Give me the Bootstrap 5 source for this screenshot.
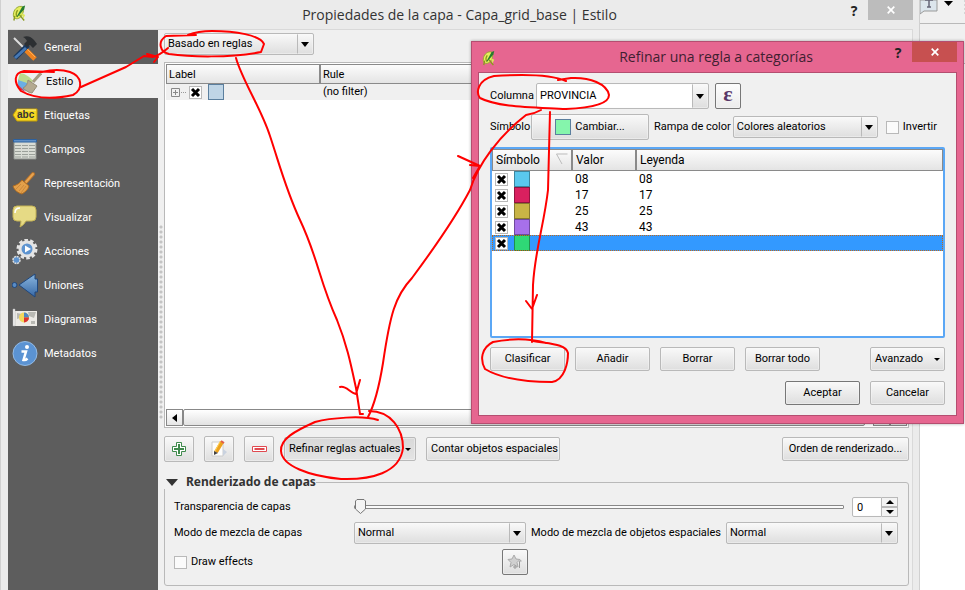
<!DOCTYPE html>
<html lang="es">
<head>
<meta charset="utf-8">
<meta name="viewport" content="width=device-width, initial-scale=1">
<title>Propiedades de la capa - Capa_grid_base | Estilo</title>
<link href="https://cdn.jsdelivr.net/npm/bootstrap@5.3.0/dist/css/bootstrap.min.css" rel="stylesheet">
<style>
:root { --face: #f0f0f0; --edge: #b9b9b9; --pink: #e66690; }
body { font: 11px/14px Roboto, Tahoma, sans-serif; color: #000; background: #fff; min-height: 100vh; overflow-x: hidden; }

/* main window */
.win { background: #ebebeb; border-right: 1px solid #d0d0d0; border-left: 1px solid #d0d0d0; padding: 0 6px 0 7px; min-width: 0; }
.win-title { height: 29px; font: 14px/22px "Open Sans", "Segoe UI", sans-serif; color: #333; }
.win-body { background: var(--face); border: 1px solid #d9d9d9; border-width: 1px 1px 0 0; min-height: 0; }
.tbtn { border: 0; background: none; padding: 0; font: bold 14px/20px "Noto Sans", sans-serif; color: #222; width: 20px; height: 21px; }
.xbtn { border: 0; width: 45px; height: 20px; background: #bcbcbc; padding: 0; }
.xbtn svg { display: block; margin: auto; }

/* section list */
.side { width: 150px; background: #5d5d5d; }
.side a { height: 34px; color: #fff; text-decoration: none; padding: 2px 4px 0; gap: 6px; font-size: 12px; }
.side a svg { width: 26px; height: 26px; flex: none; }
.side a.on { background: var(--face); color: #000; padding-left: 9px; gap: 4px; }
.side a.on svg { width: 25px; }
.side a, .side a.on { font-size: 11px; }
.grip { width: 6px; margin: 195px 0 0; height: 195px; background: radial-gradient(circle at 3px 2px, #c4c4c4 1px, transparent 2px) 0 0 / 5px 5px repeat-y; }
.pane { padding: 3px 3px 4px 0; min-width: 0; }

/* controls */
.ctl, .pick, .num { border: 1px solid var(--edge); border-radius: 2px; background-color: #eee; background-image: linear-gradient(#f9f9f9, #dedede); color: #000; font: inherit; padding: 0 4px; height: 24px; box-shadow: inset 0 0 0 1px #fafafa66; white-space: nowrap; }
.ctl.sq { width: 30px; height: 26px; padding: 0; display: flex; align-items: center; justify-content: center; }
.ctl.dk { border-color: #777; }
.ctl.w75 { width: 75px; }
.ctl.refine { width: 132px; background-image: linear-gradient(#d8d8d8, #e4e4e4); }
.ctl.count { width: 134px; }
.ctl.order { width: 127px; }
.ctl.star { width: 26px; }
.ctl.eps { width: 26px; margin-left: 6px; font: bold 22px/20px "Liberation Serif", serif; color: #5a3768; background-image: linear-gradient(#fdfdfd, #ececec); padding-bottom: 5px; }
.ctl.sym { width: 118px; height: 26px; }
.pick { appearance: none; height: 22px; padding: 0 20px 0 3px; text-overflow: ellipsis; background-repeat: no-repeat;
  background-image: url("data:image/svg+xml,%3Csvg xmlns='http://www.w3.org/2000/svg' viewBox='0 0 8 5'%3E%3Cpath d='M0 0h8L4 5z'/%3E%3C/svg%3E"), linear-gradient(#b9b9b9, #b9b9b9), linear-gradient(#f9f9f9, #dedede);
  background-position: right 4px center, right 15px top, 0 0; background-size: 8px 5px, 1px 100%, auto; }
.pick.lite { height: 26px; background-color: #fff; background-size: 8px 5px, 1px 100%, 15px 100%; background-position: right 4px center, right 15px top, right top; }
.caret { width: 0; height: 0; border: 3px solid transparent; border-top-color: #000; border-bottom: 0; display: inline-block; }
.tick { appearance: none; width: 13px; height: 13px; margin: 0; border: 1px solid var(--edge); background: #fbfbfb; flex: none; display: block; }
.tick:checked { background: #fff url("data:image/svg+xml,%3Csvg xmlns='http://www.w3.org/2000/svg' viewBox='0 0 11 11'%3E%3Cpath d='M2 2l7 7M9 2l-7 7' stroke='%23000' stroke-width='3'/%3E%3C/svg%3E") center / 11px 11px no-repeat; }

/* rule tree and category table */
.frame { background: #fff; border: 1px solid #b9b9b9; padding: 1px; flex: 1 1 auto; margin-top: 7px; }
.grid-t { width: 100%; table-layout: fixed; border-collapse: separate; border-spacing: 0; }
.grid-t th { font-weight: 400; height: 20px; padding: 0 3px; background: linear-gradient(#fcfcfc, #e4e4e4); border: 1px solid #8a8a8a; }
.grid-t td { height: 16px; padding: 0 3px; line-height: 16px; }
.tree td { background: var(--face); }
.tree th { padding: 2px 2px 0; }
.tree .tick { margin: 0 6px 0 2px; }
.chip { width: 16px; height: 16px; border: 1px solid #5b7f9e; display: block; flex: none; }
.hbar { height: 17px; }
.hbar button { width: 17px; border: 1px solid #888; background: linear-gradient(#fff, #e6e6e6); padding: 0; display: flex; align-items: center; justify-content: center; }
.hbar div { border: 1px solid #888; background: linear-gradient(#fff, #e2e2e2); border-radius: 2px; }
.tools { gap: 10px; }

/* layer rendering group */
.grp { border: 1px solid var(--edge); border-radius: 3px; margin: 13px 0 0; padding: 6px 10px 10px 9px; min-width: 0; }
.grp legend { float: none; width: auto; font: bold 12px/14px "Noto Sans", sans-serif; color: #333; margin: -8px 0 0 -10px; padding: 0 0 0 2px; background: var(--face); }
.lab { width: 180px; flex: none; }
.r1 { margin-top: 2px; }
.r2, .r3 { margin-top: 5px; }
.gap-lab { margin: 0 5px; }
.fx-label { width: 311px; }
.slide { appearance: none; height: 18px; background: none; margin: 0; min-width: 0; }
.slide::-webkit-slider-runnable-track { height: 4px; border: 1px solid #888; border-radius: 1px; background: #fafafa; }
.slide::-webkit-slider-thumb { appearance: none; width: 11px; height: 15px; margin-top: -7px; background: url("data:image/svg+xml,%3Csvg xmlns='http://www.w3.org/2000/svg' viewBox='0 0 11 15'%3E%3Cpath d='M2 .5h7L10.500 2v8l-5 4.500-5-4.500V2z' fill='%23f4f4f4' stroke='%23777'/%3E%3C/svg%3E"); }
.num { width: 30px; height: 20px; background: #fff; border-radius: 2px 0 0 2px; }
.spin button { border: 1px solid var(--edge); border-left: 0; background: #f3f3f3; width: 16px; height: 10px; padding: 0; display: flex; align-items: center; justify-content: center; }

/* application behind */
.rest { width: 45px; flex: none; }
.rest-top { height: 24px; background: var(--face); border-bottom: 1px solid #b9b9b9; }
.rest-mid { height: 40px; background: var(--face); border-bottom: 1px solid #b9b9b9; }

/* floating dialog */
.dlg { position: absolute; top: 41px; left: 471px; right: 1px; background: var(--pink); border: 1px solid #b44e70; padding: 0 6px 7px; box-shadow: 0 0 3px #0005; }
.dlg-title { height: 30px; font: 14px/30px "Open Sans", "Segoe UI", sans-serif; color: #3f2030; }
.dlg-title .xbtn { background: #c75050; }
.dlg-body { background: var(--face); border: 1px solid #b44e70; padding: 10px 11px; }
.l1 { width: 46px; } .l2 { width: 41px; } .l3 { margin: 0 2px 0 5px; }
.r-sym { margin: 5px 0 7px; }
.cats { border: 2px solid #5ba7f5; border-radius: 2px; height: 191px; padding: 0; margin: 0; }
.cats th { font-size: 12px; height: 22px; }
.cats td { font-size: 12px; }
.cats .chip { border-color: #0005; }
.cats .tick { margin: 0 6px 0 0; }
.cats .sel { outline: 1px dotted #c06a1c; outline-offset: -1px; }
.cats .sel td { background: #3399ff; }
.acts { gap: 10px; margin-top: 9px; }
.acts + .acts { margin-top: 10px; }

.ink { position: absolute; top: 0; left: 0; pointer-events: none; }
</style>
<script src="https://cdn.jsdelivr.net/npm/bootstrap@5.3.0/dist/js/bootstrap.bundle.min.js"></script>
</head>
<body class="d-flex position-relative">
<svg class="d-none">
  <symbol id="q" viewBox="0 0 16 18"><path d="M8 2C4 3 1 7 1.500 12c1 4 5 4 8 1 3-4 4-10 1-11z" fill="#e4ee5e" stroke="#93a52c"/><path d="M6 6c-2 3-2 6 0 7M8 11l5 6M3 12l-1 5" stroke="#8a9b1d" fill="none" stroke-width="1.500"/><path d="M5 13L11 2l3-1-1 4-7 8" fill="#257c2e"/><path d="M10 9l4 2-2 4z" fill="#dde75b"/></symbol>
  <symbol id="x" viewBox="0 0 8 8"><path d="M.7.7l6.600 6.600M7.300.7L.7 7.300" stroke="#fff" stroke-width="1.700"/></symbol>
</svg>

<main class="win d-flex flex-column flex-grow-1">
  <header class="win-title d-flex">
    <svg class="mt-1 ms-1" width="15" height="18"><use href="#q"/></svg>
    <div class="flex-grow-1 text-center pt-1 ps-5">Propiedades de la capa - Capa_grid_base | Estilo</div>
    <button class="tbtn me-1" type="button" aria-label="Ayuda">?</button>
    <button class="xbtn" type="button" aria-label="Cerrar"><svg width="8" height="8"><use href="#x"/></svg></button>
  </header>
  <div class="win-body d-flex flex-grow-1">
    <nav class="side d-flex flex-column flex-shrink-0">
      <a class="d-flex align-items-center" href="#"><svg viewBox="0 0 26 26"><path d="M2 3l12 12" stroke="#ddd" stroke-width="2"/><path d="M13 14l10 10" stroke="#ee8320" stroke-width="5"/><path d="M15 14l8 8" stroke="#ffad54"/><path d="M16 10L3 23" stroke="#19375e" stroke-width="5"/><path d="M14 13L3 23" stroke="#4779b5" stroke-width="3"/><path d="M11 2c5-2 8 0 11 3l3 4-4 4-3-3-3 2-3-3 3-3c-1-2-2-3-4-4z" fill="#2c2f32"/></svg>General</a>
      <a class="d-flex align-items-center on" href="#"><svg viewBox="0 0 25 26"><path d="M1 10l9 2v10L6 21 1 17z" fill="#6aaee4"/><path d="M3 4c6 1 10 4 13 8l-3 3L1 11z" fill="#bcd98c"/><path d="M1 16l8 7-5-2z" fill="#c63a60"/><path d="M24 4l-8 9" stroke="#a49b82" stroke-width="3"/><path d="M11 11l9 6-5 7c-3 0-7-3-9-5 3-1 5-5 5-8z" fill="#b3a990" stroke="#958c76"/></svg>Estilo</a>
      <a class="d-flex align-items-center" href="#"><svg viewBox="0 0 26 26"><path d="M1 12l4-6h20v12H5z" fill="#f5d722" stroke="#c29c08"/><path d="M5 7h19" stroke="#fff18a"/><text x="5" y="15" font-family="Liberation Sans" font-weight="bold" font-size="10" fill="#333">abc</text></svg>Etiquetas</a>
      <a class="d-flex align-items-center" href="#"><svg viewBox="0 0 26 26"><path d="M2 3h22v19H2z" fill="#d9dcd5" stroke="#8b8f8b"/><path d="M1.500 2.500h23V5h-23z" fill="#5f8fc7" stroke="#2d609d"/><path d="M3 8.500h20M3 11.500h20M3 14.500h20M3 17.500h20M3 20h20" stroke="#9ba09a" stroke-dasharray="6 1"/></svg>Campos</a>
      <a class="d-flex align-items-center" href="#"><svg viewBox="0 0 26 26"><path d="M21 3l-7 8" stroke="#b9732b" stroke-width="4" stroke-linecap="round"/><path d="M21 3l-7 8" stroke="#e8a450" stroke-width="2" stroke-linecap="round"/><path d="M10 9l7 6c-1 4-4 6-7 8-4-1-8-4-9-8 4-1 7-3 9-6z" fill="#e3a04a" stroke="#ab6a22"/><path d="M9 13l-5 5M12 14l-5 6M14 15l-5 7" stroke="#cd883a"/></svg>Representación</a>
      <a class="d-flex align-items-center" href="#"><svg viewBox="0 0 26 26"><path d="M5 1h15q4 0 4 4v7q0 4-4 4h-6q-2 4-6 6 1-3 1-6H5q-4 0-4-4V5q0-4 4-4z" fill="#e6da85" stroke="#c5b355"/><path d="M3 8q0-5 5-5" stroke="#fff" stroke-width="1.500" fill="none"/></svg>Visualizar</a>
      <a class="d-flex align-items-center" href="#"><svg viewBox="0 0 26 26"><circle cx="15" cy="10" r="9" fill="none" stroke="#e4e4e4" stroke-width="3" stroke-dasharray="3.500 2.160"/><circle cx="15" cy="10" r="7" fill="#5e94d0" stroke="#e4e4e4" stroke-width="3"/><path d="M13 6.500v7l6-3.500z" fill="#fff"/><circle cx="4.500" cy="21" r="3.500" fill="#5e94d0" stroke="#ddd" stroke-width="1.500" stroke-dasharray="2 .7"/></svg>Acciones</a>
      <a class="d-flex align-items-center" href="#"><svg viewBox="0 0 26 26"><defs><linearGradient id="bl" x2="0" y2="1"><stop stop-color="#8bb7df"/><stop offset="1" stop-color="#3768a6"/></linearGradient></defs><circle cx="2.500" cy="12" r="2.500" fill="#5a8cc4" stroke="#1f477d"/><path d="M7 12L23 1v5h2.500v13H23v5z" fill="url(#bl)" stroke="#1f477d"/></svg>Uniones</a>
      <a class="d-flex align-items-center" href="#"><svg viewBox="0 0 26 26"><path d="M3 4h22v15H3z" fill="#eceae6"/><path d="M1 2h2v17H1z" fill="#f8f8f8" stroke="#aaa" stroke-width=".5"/><path d="M5 6l5 1-2 4-3 1zM16 5h8l-2 6-5-2zM19 14h4v3h-4z" fill="#b9b9b4"/><circle cx="12" cy="10.500" r="5" fill="#f3d75c"/><path d="M12 10.500v-5a5 5 0 0 1 5 5z" fill="#4f87c2"/><path d="M12 10.500h5a5 5 0 0 1-5 5z" fill="#dc3131"/></svg>Diagramas</a>
      <a class="d-flex align-items-center" href="#"><svg viewBox="0 0 26 26"><circle cx="13" cy="12.500" r="12" fill="#5b93d3" stroke="#94bbe5"/><circle cx="15" cy="6" r="2" fill="#fff"/><path d="M9.500 10.500h4.500l-2.500 8.500q2 .5 4-1.500" fill="none" stroke="#fff" stroke-width="2.500"/></svg>Metadatos</a>
    </nav>
    <div class="grip flex-shrink-0"></div>
    <section class="pane d-flex flex-column flex-grow-1">
      <div class="d-flex"><select class="pick" style="width:150px" aria-label="Tipo de estilo"><option>Basado en reglas</option></select></div>
      <div class="frame d-flex flex-column">
        <table class="grid-t tree">
          <colgroup><col style="width:154px"><col></colgroup>
          <thead><tr><th>Label</th><th>Rule</th></tr></thead>
          <tbody><tr><td><div class="d-flex align-items-center"><svg width="18" height="9"><path d="M2.500.5h8v8h-8zM4 4.500h5M6.500 2v5" fill="none" stroke="#888"/><path d="M12 4.500h6" stroke="#999" stroke-dasharray="1 1"/></svg><input class="tick" type="checkbox" checked aria-label="(no filter)"><span class="chip" style="background:#bfd5e6"></span></div></td><td>(no filter)</td></tr></tbody>
        </table>
        <div class="hbar d-flex mt-auto">
          <button type="button" aria-label="Izquierda"><svg width="5" height="8"><path d="M5 0v8L0 4z"/></svg></button>
          <div class="flex-grow-1"></div>
          <button class="ms-2" type="button" aria-label="Anterior"><svg width="5" height="8"><path d="M5 0v8L0 4z"/></svg></button>
          <button type="button" aria-label="Siguiente"><svg width="5" height="8"><path d="M0 0v8l5-4z"/></svg></button>
        </div>
      </div>
      <div class="tools d-flex align-items-center mt-2">
        <button class="ctl sq" type="button" aria-label="Añadir regla"><svg width="16" height="16"><path d="M5.500 1.500h5v4h4v5h-4v4h-5v-4h-4v-5h4z" fill="#fff" stroke="#3f8a4c"/><path d="M8 3v10M3 8h10" stroke="#3f8a4c" stroke-width="2"/></svg></button>
        <button class="ctl sq" type="button" aria-label="Editar regla"><svg width="17" height="18"><path d="M1 2h11v14H1z" fill="#fdfdfd" stroke="#ccc"/><path d="M12 9l4 3-4 4z" fill="#c9d2df"/><path d="M11 2L5 12" stroke="#eda21e" stroke-width="4"/><path d="M9.500 1L3.500 12" stroke="#ffd257"/><path d="M3 11l4 2-4 2z" fill="#444"/><path d="M10 1l3 2" stroke="#e05c4c" stroke-width="2"/></svg></button>
        <button class="ctl sq" type="button" aria-label="Quitar regla"><svg width="15" height="7"><path d="M.5.5h14v5H.5z" fill="#fff" stroke="#e04a50"/><path d="M2.500 3h10" stroke="#e04a50" stroke-width="2"/></svg></button>
        <button class="ctl refine d-flex align-items-center justify-content-between" type="button">Refinar reglas actuales<span class="caret"></span></button>
        <button class="ctl count" type="button">Contar objetos espaciales</button>
        <button class="ctl order ms-auto" type="button">Orden de renderizado...</button>
      </div>
      <fieldset class="grp">
        <legend><svg class="me-2" width="12" height="7"><path d="M0 0h12L6 7z" fill="#333"/></svg>Renderizado de capas</legend>
        <div class="d-flex align-items-center r1">
          <label class="lab" for="tr">Transparencia de capas</label>
          <input id="tr" class="slide flex-grow-1 me-2" type="range" min="0" max="100" value="0">
          <input class="num" type="text" value="0" aria-label="Transparencia">
          <div class="spin d-flex flex-column"><button type="button" aria-label="Subir"><svg width="8" height="4"><path d="M0 4h8L4 0z"/></svg></button><button type="button" aria-label="Bajar"><svg width="8" height="4"><path d="M0 0h8L4 4z"/></svg></button></div>
        </div>
        <div class="d-flex align-items-center r2">
          <label class="lab" for="m1">Modo de mezcla de capas</label>
          <select id="m1" class="pick flex-fill"><option>Normal</option></select>
          <label class="gap-lab text-nowrap" for="m2">Modo de mezcla de objetos espaciales</label>
          <select id="m2" class="pick flex-fill"><option>Normal</option></select>
        </div>
        <div class="d-flex align-items-center r3">
          <input id="fx" class="tick me-1" type="checkbox"><label class="fx-label" for="fx">Draw effects</label>
          <button class="ctl sq dk star" type="button" disabled aria-label="Efectos"><svg width="16" height="16"><path d="M7 1l2 4 4 .5-3 3 1 4.500-4-2.500L3 13l1-4.500-3-3L5 5z" fill="#d0d0d0" stroke="#aaa"/><path d="M8 11v4M6 13h4M12.500 14V8q0-2 2-1" fill="none" stroke="#999"/></svg></button>
        </div>
      </fieldset>
    </section>
  </div>
</main>

<aside class="rest">
  <div class="rest-top d-flex"><svg width="45" height="23"><path d="M0 0h17v11H4l-4 3z" fill="#dce5ec" stroke="#999"/><path d="M5 0h8M9 0v7M7 7h4" stroke="#667" stroke-width="1.500"/><path d="M24 1h9l-4.500 5z"/><path d="M45 0v16" stroke="#bbb" stroke-dasharray="2 2"/></svg></div>
  <div class="rest-mid"></div>
</aside>

<div class="dlg" role="dialog" aria-labelledby="dt">
  <div class="dlg-title d-flex">
    <svg class="mt-2 ms-1" width="14" height="16"><use href="#q"/></svg>
    <div id="dt" class="flex-grow-1 text-center ps-5">Refinar una regla a categorías</div>
    <button class="tbtn me-1" type="button" aria-label="Ayuda">?</button>
    <button class="xbtn" type="button" aria-label="Cerrar"><svg width="8" height="8"><use href="#x"/></svg></button>
  </div>
  <div class="dlg-body">
    <div class="d-flex align-items-center">
      <label class="l1" for="co">Columna</label>
      <select id="co" class="pick lite" style="width:173px"><option>PROVINCIA</option></select>
      <button class="ctl sq dk eps" type="button" aria-label="Expresión">ε</button>
    </div>
    <div class="d-flex align-items-center r-sym">
      <span class="l2">Símbolo</span>
      <button class="ctl sym d-flex align-items-center justify-content-center" type="button"><span class="chip me-1" style="background:#85f5ac"></span>Cambiar...</button>
      <label class="l3 text-nowrap" for="ra">Rampa de color</label>
      <select id="ra" class="pick flex-grow-1"><option>Colores aleatorios</option></select>
      <input id="inv" class="tick ms-2 me-1" type="checkbox"><label class="me-2" for="inv">Invertir</label>
    </div>
    <div class="frame cats">
      <table class="grid-t">
        <colgroup><col style="width:80px"><col style="width:64px"><col></colgroup>
        <thead><tr><th><div class="d-flex justify-content-between">Símbolo<svg width="12" height="12"><path d="M11.500 1H.5L6 11" fill="none" stroke="#bbb"/></svg></div></th><th>Valor</th><th>Leyenda</th></tr></thead>
        <tbody>
          <tr><td><div class="d-flex align-items-center"><input class="tick" type="checkbox" checked aria-label="08"><span class="chip" style="background:#5ac8ee"></span></div></td><td>08</td><td>08</td></tr>
          <tr><td><div class="d-flex align-items-center"><input class="tick" type="checkbox" checked aria-label="17"><span class="chip" style="background:#d9205f"></span></div></td><td>17</td><td>17</td></tr>
          <tr><td><div class="d-flex align-items-center"><input class="tick" type="checkbox" checked aria-label="25"><span class="chip" style="background:#c9b446"></span></div></td><td>25</td><td>25</td></tr>
          <tr><td><div class="d-flex align-items-center"><input class="tick" type="checkbox" checked aria-label="43"><span class="chip" style="background:#a770ea"></span></div></td><td>43</td><td>43</td></tr>
          <tr class="sel"><td><div class="d-flex align-items-center"><input class="tick" type="checkbox" checked aria-label="Vacío"><span class="chip" style="background:#2fd876"></span></div></td><td></td><td></td></tr>
        </tbody>
      </table>
    </div>
    <div class="d-flex acts">
      <button class="ctl w75" type="button">Clasificar</button>
      <button class="ctl w75" type="button">Añadir</button>
      <button class="ctl w75" type="button">Borrar</button>
      <button class="ctl w75" type="button">Borrar todo</button>
      <button class="ctl w75 ms-auto d-flex align-items-center justify-content-between" type="button">Avanzado<span class="caret"></span></button>
    </div>
    <div class="d-flex acts justify-content-end">
      <button class="ctl w75 dk" type="button">Aceptar</button>
      <button class="ctl w75" type="button">Cancelar</button>
    </div>
  </div>
</div>

<svg class="ink" width="965" height="590" fill="none" stroke="#f00" stroke-width="2" stroke-linecap="round" stroke-linejoin="round" aria-hidden="true">
  <path d="M196 35L166 36C157 42 160 52 169 54C190 57 230 58 261 52L264 44C260 35 235 31 212 31Q198 31 188 35"/>
  <path d="M54 72L24 71C13 73 14 83 21 91C35 99 55 99 73 95C84 89 82 76 70 72Q58 68 42 72L22 72"/>
  <path d="M81 87L126 67 144 56 153 57Q160 55 168 48M147 54L158 57 154 62"/>
  <path d="M236 58C242 80 261 108 270 136C280 166 286 190 300 220C318 258 319 280 337 320C347 345 351 365 356 388L360 414H363M340 387C346 385 350 393 356 394L360 380"/>
  <path d="M368 417Q377 400 383 363C390 315 395 296 412 278C435 247 459 211 470 190C478 164 499 136 526 115Q534 114 541 110M458 156L480 166 473 178M470 165L480 166"/>
  <path d="M378 420C362 415 330 418 315 422C295 431 280 439 281 451C282 466 309 476 341 479C371 480 400 473 403 448C403 429 391 411 369 411"/>
  <path d="M566 81C550 74 523 74 494 76C477 80 476 93 480 98C497 107 530 107 566 109C590 108 609 104 609 95C607 84 590 77 571 78L558 80"/>
  <path d="M550 112L548 190C544 225 535 250 533 285L532 342M526 301L532 309 537 295"/>
  <path d="M546 343C528 338 508 339 493 342C481 348 480 360 485 369C500 378 525 382 552 382C565 380 568 362 568 353C566 344 550 344 533 341"/>
</svg>
</body>
</html>
